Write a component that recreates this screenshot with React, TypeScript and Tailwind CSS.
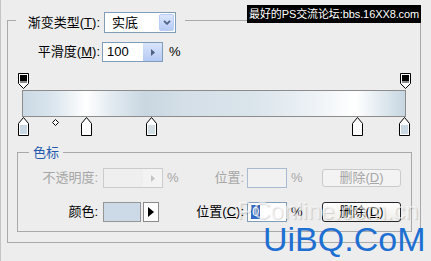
import React from 'react';

const font = "font-['Liberation_Sans','Noto_Sans_CJK_SC',sans-serif]";

// stop centres in page px; editor box starts at x=17
const topStops = [23, 405];
const bottomStops = [
  { x: 23, color: '#c9d8e3' },
  { x: 86, color: '#ffffff' },
  { x: 151, color: '#d3dee4' },
  { x: 357, color: '#ffffff' },
  { x: 404, color: '#c9d8e3' },
];

const TopStop = () => (
  <svg width="11" height="16" viewBox="0 0 11 16">
    <path d="M0.5 0.5H10.5V10.5L5.5 15.5L0.5 10.5Z" fill="#fff" stroke="#000" />
    <rect x="2" y="2" width="7" height="6" fill="#000" />
    <rect x="2" y="8" width="7" height="2" fill="#8a8a8a" />
  </svg>
);

const BottomStop = ({ color }: { color: string }) => (
  <svg width="11" height="19" viewBox="0 0 11 19">
    <path d="M5.5 0.5L10.5 6.5V18.5H0.5V6.5Z" fill="#fff" stroke="#000" />
    <rect x="2" y="8" width="7" height="9" fill={color} />
  </svg>
);

const SmallArrow = ({ color }: { color: string }) => (
  <svg width="4" height="7" viewBox="0 0 4 7">
    <path d="M0 0L4 3.5L0 7Z" fill={color} />
  </svg>
);

export default function App() {
  return (
    <div
      className={`relative h-[261px] w-[431px] overflow-hidden border-l border-[#c4c4c4] bg-[#ededed] pl-[6px] pt-[7px] text-[13px] text-black ${font}`}
    >
      <fieldset className="w-[414px] border border-[#a9a9a9] pb-[10px]">
        <legend className="ml-[8px] pl-0 pr-[9px] pt-[5px]">
          <div className="flex h-[21px] items-center">
            <div className="w-[84px] text-right">
              渐变类型(<span className="underline">T</span>):
            </div>
            <div className="ml-[4px] flex h-[21px] w-[72px] items-center border border-[#7f9db9] bg-white">
              <span className="flex-1 pl-[7px]">实底</span>
              <div className="mr-[1px] flex h-[17px] w-[15px] items-center justify-center rounded-[2px] border border-[#b9cdf5] bg-[linear-gradient(#dbe6fd,#b7cbf6)]">
                <svg width="8" height="5" viewBox="0 0 8 5">
                  <path d="M1 0.8L4 3.8L7 0.8" fill="none" stroke="#4d6185" strokeWidth="1.8" />
                </svg>
              </div>
            </div>
          </div>
        </legend>

        <div className="mt-[9px] flex h-[20px] items-center">
          <div className="w-[92px] text-right">
            平滑度(<span className="underline">M</span>):
          </div>
          <div className="ml-[2px] flex h-[20px] w-[61px] border border-[#7f9db9] bg-white">
            <div className="flex-1 pl-[4px] leading-[18px]">100</div>
            <div className="flex w-[19px] items-center justify-center bg-[linear-gradient(#d9e4fb,#b6caf4)]">
              <SmallArrow color="#4d6185" />
            </div>
          </div>
          <span className="ml-[6px]">%</span>
        </div>

        <div className="ml-[9px] mt-[11px] w-[394px]">
          <div className="relative h-[17px]">
            {topStops.map((x, i) => (
              <div key={i} className="absolute top-0" style={{ left: Math.round(x - 22.5) }}>
                <TopStop />
              </div>
            ))}
          </div>
          <div className="mx-[5px] h-[27px] border border-[#8c8c8c] bg-[linear-gradient(to_right,#cad9e4_0%,#dbe6ee_8%,#ffffff_16.5%,#e3ebf1_23%,#c9d7e1_32%,#d4dfe7_42%,#dae4eb_60%,#edf2f6_76%,#ffffff_87%,#e0e9ef_94%,#c6d6e1_100%)]" />
          <div className="relative h-[19px]">
            {bottomStops.map((s, i) => (
              <div key={i} className="absolute top-0" style={{ left: Math.round(s.x - 22.5) }}>
                <BottomStop color={s.color} />
              </div>
            ))}
            <svg className="absolute left-[35px] top-[2px]" width="7" height="7" viewBox="0 0 7 7">
              <path d="M3.5 0.5L6.5 3.5L3.5 6.5L0.5 3.5Z" fill="#fff" stroke="#000" />
            </svg>
          </div>
        </div>

        <fieldset className="ml-[9px] mt-[8px] w-[395px] border border-[#a9a9a9] pb-[9px]">
          <legend className="ml-[11px] px-[4px] leading-[17px] text-[#245aae]">色标</legend>

          <div className="mt-[7px] flex h-[20px] items-center text-[#a6a6a6]">
            <div className="w-[80px] text-right">不透明度:</div>
            <div className="ml-[5px] flex w-[88px] items-center">
              <div className="flex h-[20px] w-[60px] border border-[#cbcbcb] bg-[#efefef]">
                <div className="flex-1" />
                <div className="flex w-[19px] items-center justify-center bg-[#f3f3f3]">
                  <SmallArrow color="#c4c4c4" />
                </div>
              </div>
              <span className="ml-[4px]">%</span>
            </div>
            <div className="w-[53px] text-right">位置:</div>
            <div className="ml-[3px] h-[20px] w-[40px] border border-[#a9bbd1] bg-[#f1f1f1]" />
            <div className="w-[35px] pl-[4px]">%</div>
            <div className="flex h-[18px] w-[79px] items-center justify-center rounded-[3px] border border-[#cacaca] bg-[#f3f3f3]">
              删除(<span className="underline">D</span>)
            </div>
          </div>

          <div className="mt-[14px] flex h-[20px] items-center">
            <div className="w-[80px] text-right">颜色:</div>
            <div className="ml-[5px] flex w-[88px] items-center">
              <div className="h-[20px] w-[38px] border border-[#959595] bg-[#cbdae6]" />
              <div className="ml-[2px] flex h-[20px] w-[16px] items-center justify-center border border-[#8a8a8a] bg-white">
                <svg width="6" height="10" viewBox="0 0 6 10">
                  <path d="M0 0L6 5L0 10Z" fill="#000" />
                </svg>
              </div>
            </div>
            <div className="w-[53px] text-right">
              位置(<span className="underline">C</span>):
            </div>
            <div className="ml-[3px] flex h-[20px] w-[40px] items-center border border-[#7f9db9] bg-white pl-[3px]">
              <span className="bg-[#316ac5] px-[1px] leading-[14px] text-white">0</span>
            </div>
            <div className="w-[35px] pl-[4px]">%</div>
            <div className="flex h-[20px] w-[79px] items-center justify-center rounded-[3px] border border-[#22232b] bg-[linear-gradient(#ffffff,#eeede8)]">
              删除(<span className="underline">D</span>)
            </div>
          </div>
        </fieldset>
      </fieldset>

      <div className="absolute left-[246px] top-[5px] h-[18px] whitespace-nowrap bg-black px-[2px] text-[11px] leading-[18px] tracking-[-0.1px] text-white">
        最好的PS交流论坛:bbs.16XX8.com
      </div>

      <div className="absolute left-[236px] top-[197px] whitespace-nowrap text-[24px] leading-[28px] text-white/60 [text-shadow:1px_1px_1px_rgba(0,0,0,0.15)]">
        PConline.com.cn
      </div>
      <div className="absolute left-[262px] top-[222px] whitespace-nowrap text-[34px] leading-[34px] text-[#1e6fd2]">
        UiBQ.CoM
      </div>
    </div>
  );
}
